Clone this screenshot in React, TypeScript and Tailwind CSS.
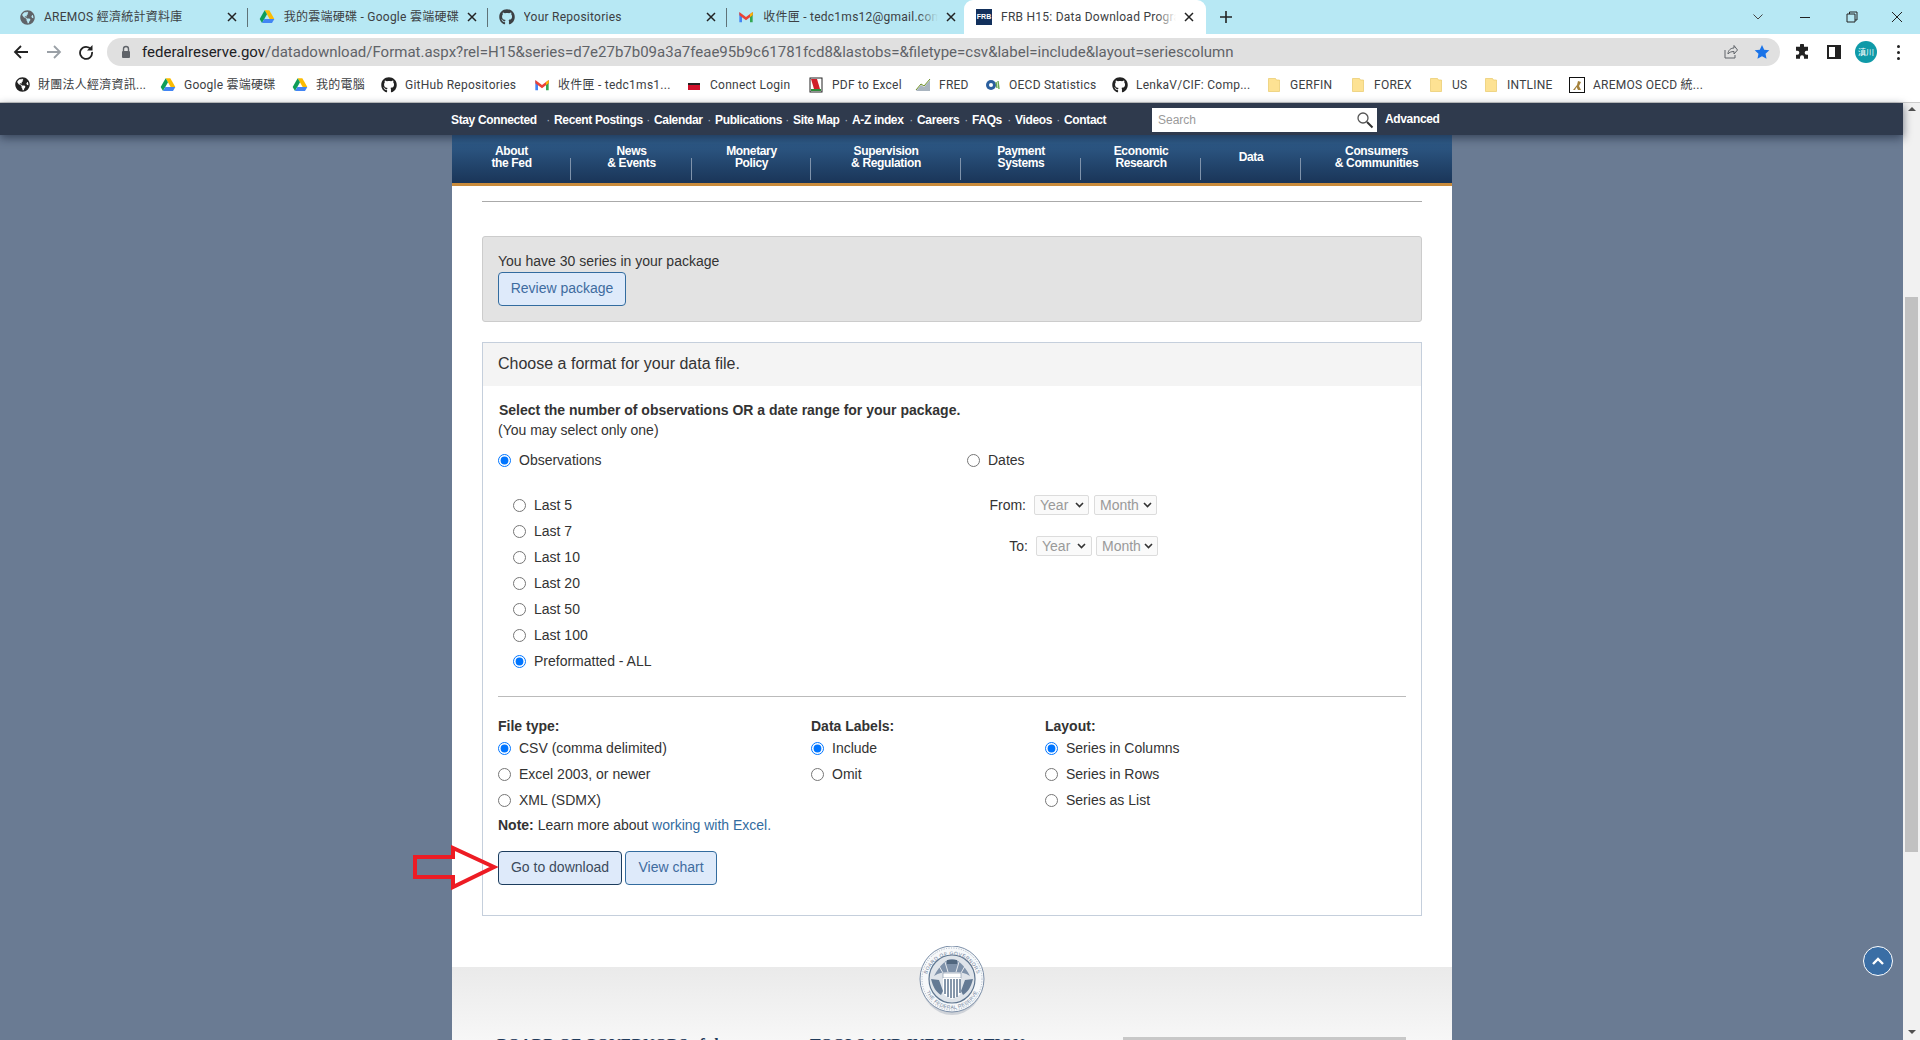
import React from 'react';
import { FaGithub, FaGlobeAmericas } from 'react-icons/fa';

function Drive({ s = 16 }: { s?: number }) {
  return (
    <svg width={s} height={s} viewBox="0 0 24 24" className="shrink-0">
      <path d="M8.5 2h7L23 15h-7z" fill="#fbbc04" />
      <path d="M8.5 2 1 15l3.5 6L12 8z" fill="#0f9d58" />
      <path d="M4.5 21h15L23 15H8z" fill="#4285f4" />
    </svg>
  );
}
function Gmail() {
  return (
    <svg width="16" height="16" viewBox="0 0 24 24" className="shrink-0">
      <path d="M2 5v15h4V10z" fill="#4285f4" />
      <path d="M22 5v15h-4V10z" fill="#34a853" />
      <path d="M2 4.5 12 12l10-7.5v5L12 17 2 9.5z" fill="#ea4335" />
      <path d="M18 8l4-3.5V9l-4 3z" fill="#fbbc04" />
    </svg>
  );
}
function Folder() {
  return (
    <svg width="16" height="16" viewBox="0 0 16 16" className="shrink-0">
      <path d="M2.5 1.5h7l1 1.5h3v11.5h-11z" fill="#fde293" stroke="#e8c868" strokeWidth="0.7" />
    </svg>
  );
}
function Globe() {
  return <FaGlobeAmericas className="text-[15px] shrink-0 text-[#5f6368]" />;
}
function X({ c = '#222' }: { c?: string }) {
  return (
    <svg width="10" height="10" viewBox="0 0 10 10" className="shrink-0">
      <path d="M1 1l8 8M9 1 1 9" stroke={c} strokeWidth="1.5" />
    </svg>
  );
}

function Tab({ icon, text, w, last, fade }: { icon: React.ReactNode; text: string; w: string; last?: boolean; fade?: boolean }) {
  return (
    <div className="relative w-[239.75px] h-[34px] flex items-center pl-[11px] shrink-0">
      <div className="w-4 flex justify-center shrink-0">{icon}</div>
      <div className={`${w} relative ml-[9px] overflow-hidden whitespace-nowrap text-[12px] tracking-[0.25px] text-[#3c4043] shrink-0`}>
        {text}
        {fade && <div className="absolute right-0 top-0 bottom-0 w-[20px] bg-gradient-to-l from-[#b7e8f4] to-transparent" />}
      </div>
      <div className="absolute right-[11px] top-[12px]"><X /></div>
      {!last && <div className="absolute right-0 top-[8px] w-px h-[19px] bg-[#5f7378]" />}
    </div>
  );
}

const bookmarks: { icon: React.ReactNode; t: string; w: string }[] = [
  { icon: <FaGlobeAmericas className="text-[15px] text-[#222] shrink-0" />, t: '財團法人經濟資訊...', w: 'w-[106px]' },
  { icon: <Drive />, t: 'Google 雲端硬碟', w: 'w-[92px]' },
  { icon: <Drive />, t: '我的電腦', w: 'w-[49px]' },
  { icon: <FaGithub className="text-[16px] text-[#222] shrink-0" />, t: 'GitHub Repositories', w: 'w-[113px]' },
  { icon: <Gmail />, t: '收件匣 - tedc1ms1...', w: 'w-[112px]' },
  {
    icon: (
      <svg width="16" height="16" viewBox="0 0 16 16" className="shrink-0">
        <rect x="2" y="6" width="12" height="2" fill="#222" />
        <rect x="2" y="8" width="12" height="5" fill="#d0102a" />
      </svg>
    ),
    t: 'Connect Login',
    w: 'w-[82px]',
  },
  {
    icon: (
      <svg width="16" height="16" viewBox="0 0 16 16" className="shrink-0">
        <rect x="2" y="1" width="12" height="14" fill="#fff" stroke="#222" />
        <path d="M3 2h6l3 10H6z" fill="#d0202a" />
        <rect x="3" y="12" width="10" height="2" fill="#2e8b3a" />
      </svg>
    ),
    t: 'PDF to Excel',
    w: 'w-[67px]',
  },
  {
    icon: (
      <svg width="16" height="16" viewBox="0 0 16 16" className="shrink-0">
        <path d="M1 14 6 8l3 2 6-7v11z" fill="#a9b4bf" />
        <path d="M1 13 6 7l3 2 6-7" fill="none" stroke="#6b8e23" strokeWidth="1" />
      </svg>
    ),
    t: 'FRED',
    w: 'w-[30px]',
  },
  {
    icon: (
      <svg width="16" height="16" viewBox="0 0 16 16" className="shrink-0">
        <circle cx="6" cy="8" r="5" fill="#2a5f9e" />
        <circle cx="6" cy="8" r="2" fill="#fff" />
        <path d="M11 5l1 6M13 4l1 8" stroke="#6aa84f" strokeWidth="1.4" />
      </svg>
    ),
    t: 'OECD Statistics',
    w: 'w-[87px]',
  },
  { icon: <FaGithub className="text-[16px] text-[#222] shrink-0" />, t: 'LenkaV/CIF: Comp...', w: 'w-[114px]' },
  { icon: <Folder />, t: 'GERFIN', w: 'w-[44px]' },
  { icon: <Folder />, t: 'FOREX', w: 'w-[38px]' },
  { icon: <Folder />, t: 'US', w: 'w-[15px]' },
  { icon: <Folder />, t: 'INTLINE', w: 'w-[46px]' },
  {
    icon: (
      <svg width="16" height="16" viewBox="0 0 16 16" className="shrink-0">
        <rect x="0.5" y="0.5" width="15" height="15" fill="#fff" stroke="#111" />
        <path d="M4 13 8 8l1-4 3 1-2 4 2 4H9L7.500 10 6 13z" fill="#a5823c" />
      </svg>
    ),
    t: 'AREMOS OECD 統...',
    w: 'w-[105px]',
  },
];

const topLinks: { t: string; w: string; dot: boolean }[] = [
  { t: 'Stay Connected', w: 'w-[103px]', dot: true },
  { t: 'Recent Postings', w: 'w-[100px]', dot: true },
  { t: 'Calendar', w: 'w-[61px]', dot: true },
  { t: 'Publications', w: 'w-[78px]', dot: true },
  { t: 'Site Map', w: 'w-[59px]', dot: true },
  { t: 'A-Z index', w: 'w-[65px]', dot: true },
  { t: 'Careers', w: 'w-[55px]', dot: true },
  { t: 'FAQs', w: 'w-[43px]', dot: true },
  { t: 'Videos', w: 'w-[49px]', dot: true },
  { t: 'Contact', w: 'w-[41px]', dot: false },
];

const navs: { a: string; b?: string; w: string; sep: boolean }[] = [
  { a: 'About', b: 'the Fed', w: 'w-[119px]', sep: true },
  { a: 'News', b: '& Events', w: 'w-[121px]', sep: true },
  { a: 'Monetary', b: 'Policy', w: 'w-[119px]', sep: true },
  { a: 'Supervision', b: '& Regulation', w: 'w-[150px]', sep: true },
  { a: 'Payment', b: 'Systems', w: 'w-[120px]', sep: true },
  { a: 'Economic', b: 'Research', w: 'w-[120px]', sep: true },
  { a: 'Data', w: 'w-[100px]', sep: true },
  { a: 'Consumers', b: '& Communities', w: 'w-[151px]', sep: false },
];

function Radio({ label, on, name }: { label: string; on?: boolean; name: string }) {
  return (
    <label className="flex items-center gap-2 h-[26px]">
      <input type="radio" name={name} defaultChecked={on} className="w-[13px] h-[13px] shrink-0" />
      <span>{label}</span>
    </label>
  );
}

function Btn({ children, w, dark }: { children: React.ReactNode; w: string; dark?: boolean }) {
  return (
    <button
      className={`${w} h-[34px] pb-[2px] rounded-[4px] border bg-[#deeafa] text-[14px] ${
        dark ? 'border-[#1c3d5e] text-[#3c4a5c]' : 'border-[#336c9f] text-[#3f6c9f]'
      }`}
    >
      {children}
    </button>
  );
}

function Sel({ text, w, chev }: { text: string; w: string; chev: string }) {
  return (
    <div className={`${w} relative h-[20px] shrink-0`}>
      <select
        disabled
        defaultValue={text}
        className="w-full h-full appearance-none border border-[#dcdcdc] rounded-[2px] bg-[#fafafa] text-[14px] leading-[18px] text-[#999999] opacity-100 pl-[5px]"
      >
        <option>{text}</option>
      </select>
      <svg width="9" height="6" viewBox="0 0 9 6" className={`absolute ${chev} top-[7px]`}>
        <path d="M1 1l3.500 3.500L8 1" fill="none" stroke="#333" strokeWidth="1.600" />
      </svg>
    </div>
  );
}

function Seal() {
  return (
    <svg width="66" height="72" viewBox="0 0 66 72" className="absolute left-[467px] top-[-21px]">
      <defs>
        <path id="sealTop" d="M7 36a26 27 0 0 1 52 0" />
        <path id="sealBot" d="M5 34a28 29 0 0 0 56 0" />
      </defs>
      <ellipse cx="33" cy="36" rx="31" ry="33" fill="#aab2bd" opacity="0.5" />
      <ellipse cx="33" cy="33" rx="32" ry="33" fill="#f6f8fa" stroke="#7c8fa8" strokeWidth="1" />
      <ellipse cx="33" cy="33" rx="30" ry="31" fill="none" stroke="#aab6c6" strokeWidth="1" strokeDasharray="1 1.500" />
      <text fontSize="5" fill="#6f829a" letterSpacing="0.400" fontFamily="Liberation Sans, sans-serif">
        <textPath href="#sealTop" startOffset="50%" textAnchor="middle">BOARD OF GOVERNORS</textPath>
      </text>
      <text fontSize="5" fill="#6f829a" letterSpacing="0.300" fontFamily="Liberation Sans, sans-serif">
        <textPath href="#sealBot" startOffset="50%" textAnchor="middle">THE FEDERAL RESERVE</textPath>
      </text>
      <ellipse cx="33" cy="33" rx="23" ry="24" fill="#dfe4ea" stroke="#5f7690" strokeWidth="1.200" />
      <path d="M33 13c-6 0-12 6-18 17 5-3 9-4 13-4h10c4 0 8 1 13 4-6-11-12-17-18-17z" fill="#7f92aa" />
      <path d="M20 20l4 7M26 16l3 10M40 16l-3 10M46 20l-4 7" stroke="#e6eaef" strokeWidth="1" />
      <path d="M28 14h10v4H28z" fill="#51677f" />
      <path d="M12 33c2 8 5 13 10 16l2-4-4-11zM54 33c-2 8-5 13-10 16l-2-4 4-11z" fill="#647a94" />
      <rect x="24" y="27" width="18" height="5" fill="#fff" stroke="#5f7690" strokeWidth="0.500" />
      <path d="M24 32h18v13c0 4-4 6-9 8-5-2-9-4-9-8z" fill="#fff" />
      <path d="M26 33v15M29 33v18M32 33v19M35 33v19M38 33v18M41 33v14" stroke="#5f7690" strokeWidth="1.500" />
    </svg>
  );
}

export default function App() {
  return (
    <div className="w-[1920px] h-[1040px] overflow-hidden flex flex-col bg-[#6a7b93] font-['Liberation_Sans',Arial,sans-serif]">
      {/* tab strip */}
      <div className="h-[34px] shrink-0 bg-[#b7e8f4] flex font-['Roboto','Noto_Sans_CJK_TC',sans-serif]">
        <div className="w-[8px] shrink-0" />
        <Tab icon={<Globe />} text="AREMOS 經濟統計資料庫" w="w-[170px]" />
        <Tab icon={<Drive />} text="我的雲端硬碟 - Google 雲端硬碟" w="w-[177px]" />
        <Tab icon={<FaGithub className="text-[16px] text-[#3c4043]" />} text="Your Repositories" w="w-[170px]" />
        <Tab icon={<Gmail />} text="收件匣 - tedc1ms12@gmail.com" w="w-[175px]" last fade />
        <div className="relative w-[242px] h-[34px] -ml-[3px] bg-white rounded-t-[9px] flex items-center pl-[12px] shrink-0">
          <div className="w-4 h-4 bg-[#12305c] text-white text-[7px] font-bold flex items-center justify-center shrink-0 font-['Liberation_Sans',sans-serif]">FRB</div>
          <div className="relative w-[175px] ml-[9px] overflow-hidden whitespace-nowrap text-[12px] tracking-[0.25px] text-[#3c4043] shrink-0">
            FRB H15: Data Download Program
            <div className="absolute right-0 top-0 bottom-0 w-[20px] bg-gradient-to-l from-white to-transparent" />
          </div>
          <div className="absolute left-[220px] top-[12px]"><X /></div>
        </div>
        <svg width="14" height="14" viewBox="0 0 14 14" className="ml-[13px] mt-[10px] shrink-0">
          <path d="M7 1v12M1 7h12" stroke="#222" strokeWidth="1.600" />
        </svg>
        <div className="ml-auto flex items-center h-[34px] pr-[17px]">
          <svg width="12" height="8" viewBox="0 0 12 8"><path d="M1.500 1.500 6 6l4.500-4.500" stroke="#444" fill="none" strokeWidth="1" /></svg>
          <div className="ml-[36px] w-[10px] h-px bg-[#222]" />
          <svg width="12" height="12" viewBox="0 0 12 12" className="ml-[36px]">
            <path d="M3.500 3V1h7.500v8H9M1 3h8v8H1z" fill="none" stroke="#222" />
          </svg>
          <div className="ml-[33px]"><svg width="12" height="12" viewBox="0 0 12 12"><path d="M1 1l10 10M11 1 1 11" stroke="#222" strokeWidth="1" /></svg></div>
        </div>
      </div>

      {/* toolbar */}
      <div className="h-[33px] shrink-0 bg-white flex items-center pt-[3px] font-['Roboto',sans-serif] relative">
        <svg width="16" height="16" viewBox="0 0 16 16" className="ml-[13px] shrink-0">
          <path d="M15 8H2M8 2 2 8l6 6" fill="none" stroke="#222" strokeWidth="1.800" />
        </svg>
        <svg width="16" height="16" viewBox="0 0 16 16" className="ml-[17px] shrink-0">
          <path d="M1 8h13M8 2l6 6-6 6" fill="none" stroke="#9aa0a6" strokeWidth="1.800" />
        </svg>
        <svg width="16" height="16" viewBox="0 0 16 16" className="ml-[16px] shrink-0">
          <path d="M13 5.500A6 6 0 1 0 14 8" fill="none" stroke="#222" strokeWidth="1.800" />
          <path d="M14.500 1v5.500H9z" fill="#222" />
        </svg>
        <div className="ml-[13px] w-[1673px] h-[28px] rounded-full bg-[#e0e0e0] flex items-center shrink-0 relative">
          <svg width="12" height="14" viewBox="0 0 12 14" className="ml-[13px] shrink-0">
            <rect x="2" y="6" width="8" height="7" rx="1" fill="#5f6368" />
            <path d="M3.500 6V4a2.500 2.500 0 0 1 5 0v2" fill="none" stroke="#5f6368" strokeWidth="1.400" />
          </svg>
          <div className="ml-[10px] text-[15px] whitespace-nowrap text-[#5f6368]">
            <span className="text-[#202124]">federalreserve.gov</span>/datadownload/Format.aspx?rel=H15&amp;series=d7e27b7b09a3a7feae95b9c61781fcd8&amp;lastobs=&amp;filetype=csv&amp;label=include&amp;layout=seriescolumn
          </div>
          <svg width="16" height="16" viewBox="0 0 16 16" className="absolute left-[1615px] top-[6px]">
            <path d="M3 6v8h10v-3M6 10c0-4 3-6 6-6V1.500L15.500 6 12 10V7.500c-3 0-5 1-6 2.500z" fill="none" stroke="#5f6368" strokeWidth="1" />
          </svg>
          <svg width="16" height="16" viewBox="0 0 24 24" className="absolute left-[1647px] top-[6px]">
            <path d="M12 1.500 15.300 8.500 23 9.400l-5.700 5.200 1.500 7.600L12 18.400 5.200 22.200l1.500-7.600L1 9.400l7.700-.9z" fill="#1a73e8" />
          </svg>
        </div>
        <svg width="16" height="16" viewBox="0 0 24 24" className="ml-[14px] shrink-0">
          <path d="M9 2a3 3 0 0 1 6 0v2h6v6h-2a3 3 0 0 0 0 6h2v6h-6v-2a3 3 0 0 0-6 0v2H3v-6h2a3 3 0 0 0 0-6H3V4h6z" fill="#222" />
        </svg>
        <div className="ml-[17px] w-[14px] h-[14px] border-2 border-[#222] border-r-[6px] shrink-0" />
        <div className="ml-[14px] w-[22px] h-[22px] rounded-full bg-[#0f9aa8] text-white text-[8px] flex items-center justify-center shrink-0 font-['Noto_Sans_CJK_TC',sans-serif]">滇川</div>
        <div className="ml-[20px] flex flex-col gap-[3px] shrink-0">
          <div className="w-[3px] h-[3px] rounded-full bg-[#222]" />
          <div className="w-[3px] h-[3px] rounded-full bg-[#222]" />
          <div className="w-[3px] h-[3px] rounded-full bg-[#222]" />
        </div>
      </div>

      {/* bookmarks */}
      <div className="h-[36px] shrink-0 bg-white border-b border-[#ccc] flex items-center pl-[14px] gap-[16px] text-[12px] tracking-[0.25px] text-[#3c4043] font-['Roboto','Noto_Sans_CJK_TC',sans-serif]">
        {bookmarks.map((b) => (
          <div key={b.t} className="flex items-center gap-[8px] shrink-0">
            <div className="w-4 h-4 flex items-center justify-center shrink-0">{b.icon}</div>
            <div className={`${b.w} whitespace-nowrap`}>{b.t}</div>
          </div>
        ))}
      </div>

      {/* page + scrollbar */}
      <div className="flex-1 flex min-h-0">
        <div className="w-[1903px] shrink-0 relative">
          {/* dark bar */}
          <div className="relative z-10 h-[32px] bg-[#2f3a4d] shadow-[0_3px_10px_rgba(20,30,50,0.6)] flex items-center pl-[451px] pt-[1px] text-white text-[12px] font-bold tracking-[-0.35px]">
            {topLinks.map((l) => (
              <div key={l.t} className={`${l.w} shrink-0 flex justify-between whitespace-nowrap`}>
                <span>{l.t}</span>
                {l.dot && <span className="font-normal text-[#aab2c0] pr-[4px]">·</span>}
              </div>
            ))}
            <div className="absolute left-[1152px] top-[5px] w-[225px] h-[24px] bg-white flex items-center pl-[6px] font-normal text-[#9a9a9a] tracking-normal">
              Search
              <svg width="18" height="18" viewBox="0 0 18 18" className="absolute right-[3px] top-[3px]">
                <circle cx="7" cy="7" r="5" fill="none" stroke="#555" strokeWidth="1.300" />
                <path d="M11 11l5.500 5.500" stroke="#333" strokeWidth="2" />
              </svg>
            </div>
            <span className="absolute left-[1385px] top-[7px]">Advanced</span>
          </div>

          <div className="relative w-[1000px] ml-[452px] bg-white h-[905px] text-[14px] text-[#333]">
            {/* blue nav */}
            <div className="h-[51px] border-b-[3px] border-[#c98b3b] bg-gradient-to-b from-[#31608f] to-[#1a3558] flex text-white text-[12px] font-bold leading-[12px] tracking-[-0.35px]">
              {navs.map((n) => (
                <div key={n.a} className={`${n.w} relative flex flex-col items-center justify-center text-center shrink-0 pb-[5px]`}>
                  <span>{n.a}</span>
                  {n.b && <span>{n.b}</span>}
                  {n.sep && <div className="absolute right-0 bottom-[3px] w-px h-[22px] bg-[#7f93ab]" />}
                </div>
              ))}
            </div>

            <div className="px-[30px]">
              <div className="mt-[15px] h-px bg-[#aaaaaa]" />

              {/* package box */}
              <div className="mt-[34px] h-[86px] bg-[#e3e3e3] border border-[#cccccc] rounded-[3px] pl-[15px] pt-[14px]">
                <div className="leading-[20px]">You have 30 series in your package</div>
                <div className="mt-px"><Btn w="w-[128px]">Review package</Btn></div>
              </div>

              {/* format panel */}
              <div className="mt-[20px] h-[574px] border border-[#c5cfdc]">
                <div className="h-[43px] bg-[#f4f4f4] pl-[15px] pb-[2px] flex items-center text-[16px]">Choose a format for your data file.</div>
                <div className="px-[15px] pt-[14px]">
                  <div className="leading-[20px] font-bold ml-px">Select the number of observations OR a date range for your package.</div>
                  <div className="leading-[20px]">(You may select only one)</div>
                  <div className="flex mt-[7px]">
                    <div className="w-[469px] shrink-0">
                      <Radio name="pick" label="Observations" on />
                      <div className="mt-[19px] ml-[15px]">
                        {['Last 5', 'Last 7', 'Last 10', 'Last 20', 'Last 50', 'Last 100'].map((l) => (
                          <Radio key={l} name="obs" label={l} />
                        ))}
                        <Radio name="obs" label="Preformatted - ALL" on />
                      </div>
                    </div>
                    <div className="flex-1">
                      <Radio name="pick" label="Dates" />
                      <div className="mt-[19px] flex items-center h-[26px]">
                        <span className="w-[60px] pr-px text-right">From:</span>
                        <div className="ml-[7px]"><Sel text="Year" w="w-[55px]" chev="right-[5px]" /></div>
                        <div className="ml-[5px]"><Sel text="Month" w="w-[63px]" chev="right-[5px]" /></div>
                      </div>
                      <div className="mt-[15px] flex items-center h-[26px]">
                        <span className="w-[61px] text-right">To:</span>
                        <div className="ml-[8px]"><Sel text="Year" w="w-[56px]" chev="right-[6px]" /></div>
                        <div className="ml-[4px]"><Sel text="Month" w="w-[62px]" chev="right-[5px]" /></div>
                      </div>
                    </div>
                  </div>
                  <div className="mt-[22px] h-px bg-[#bbbbbb]" />
                  <div className="flex mt-[19px]">
                    <div className="w-[313px] shrink-0">
                      <div className="font-bold leading-[20px] h-[19px]">File type:</div>
                      <Radio name="file" label="CSV (comma delimited)" on />
                      <Radio name="file" label="Excel 2003, or newer" />
                      <Radio name="file" label="XML (SDMX)" />
                    </div>
                    <div className="w-[234px] shrink-0">
                      <div className="font-bold leading-[20px] h-[19px]">Data Labels:</div>
                      <Radio name="label" label="Include" on />
                      <Radio name="label" label="Omit" />
                    </div>
                    <div>
                      <div className="font-bold leading-[20px] h-[19px]">Layout:</div>
                      <Radio name="layout" label="Series in Columns" on />
                      <Radio name="layout" label="Series in Rows" />
                      <Radio name="layout" label="Series as List" />
                    </div>
                  </div>
                  <div className="leading-[20px] mt-[2px]">
                    <b>Note:</b> Learn more about <span className="text-[#336c9f]">working with Excel.</span>
                  </div>
                  <div className="mt-[16px] flex gap-[3px]">
                    <Btn w="w-[124px]" dark>Go to download</Btn>
                    <Btn w="w-[92px]">View chart</Btn>
                  </div>
                </div>
              </div>
            </div>

            {/* footer */}
            <div className="relative mt-[51px] h-[73px] bg-gradient-to-b from-[#eaeaea] to-[#f7f7f7]">
              <Seal />
              <div className="flex pl-[45px] pt-[68px] font-['Liberation_Serif',serif] font-bold text-[16px] text-[#1f3a5a] leading-[20px] whitespace-nowrap">
                <div className="w-[313px]">BOARD OF GOVERNORS of the</div>
                <div className="w-[313px]">TOOLS AND INFORMATION</div>
                <div className="w-[283px] h-[10px] mt-[2px] bg-[#c8c8c8]" />
              </div>
            </div>

            {/* red arrow annotation */}
            <svg width="88" height="46" viewBox="0 0 88 46" className="absolute left-[-39px] top-[710px]">
              <path d="M2 12h38V3l41 19-41 20V32H2z" fill="none" stroke="#ed1c24" strokeWidth="4" />
            </svg>
          </div>

          {/* back to top */}
          <div className="absolute left-[1863px] top-[843px] w-[30px] h-[30px] rounded-full bg-[#3a6ea5] border border-white flex items-center justify-center">
            <svg width="14" height="10" viewBox="0 0 14 10"><path d="M2 8l5-5 5 5" fill="none" stroke="#fff" strokeWidth="2.400" /></svg>
          </div>
        </div>

        {/* scrollbar */}
        <div className="w-[17px] shrink-0 bg-[#f1f1f1] relative">
          <div className="absolute left-[5px] top-[4px] w-0 h-0 border-l-[4px] border-r-[4px] border-b-[4px] border-l-transparent border-r-transparent border-b-[#505050]" />
          <div className="absolute left-[2px] top-[194px] w-[13px] h-[555px] bg-[#c1c1c1]" />
          <div className="absolute left-[5px] bottom-[6px] w-0 h-0 border-l-[4px] border-r-[4px] border-t-[4px] border-l-transparent border-r-transparent border-t-[#505050]" />
        </div>
      </div>
    </div>
  );
}
